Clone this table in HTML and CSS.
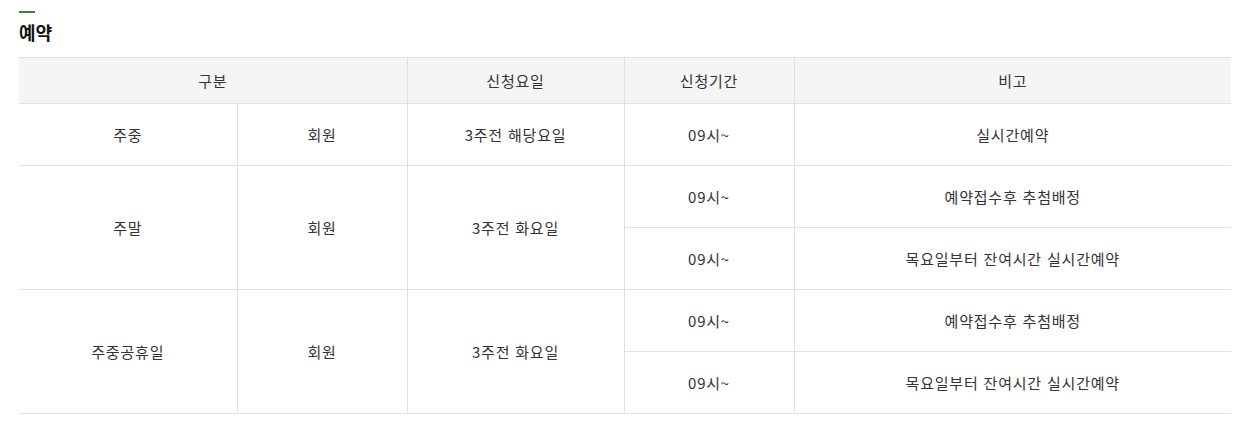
FILE: index.html
```html
<!DOCTYPE html>
<html lang="ko">
<head>
<meta charset="utf-8">
<link rel="stylesheet" href="styles.css">
</head>
<body>
<div class="section">
  <div class="title-bar"></div>
  <h3 class="title">예약</h3>
  <table class="info-table">
    <colgroup>
      <col class="c1"><col class="c2"><col class="c3"><col class="c4"><col class="c5">
    </colgroup>
    <thead>
      <tr>
        <th colspan="2">구분</th>
        <th>신청요일</th>
        <th>신청기간</th>
        <th>비고</th>
      </tr>
    </thead>
    <tbody>
      <tr>
        <td>주중</td>
        <td>회원</td>
        <td>3주전 해당요일</td>
        <td>09시~</td>
        <td>실시간예약</td>
      </tr>
      <tr>
        <td rowspan="2">주말</td>
        <td rowspan="2">회원</td>
        <td rowspan="2">3주전 화요일</td>
        <td>09시~</td>
        <td>예약접수후 추첨배정</td>
      </tr>
      <tr>
        <td>09시~</td>
        <td>목요일부터 잔여시간 실시간예약</td>
      </tr>
      <tr>
        <td rowspan="2">주중공휴일</td>
        <td rowspan="2">회원</td>
        <td rowspan="2">3주전 화요일</td>
        <td>09시~</td>
        <td>예약접수후 추첨배정</td>
      </tr>
      <tr>
        <td>09시~</td>
        <td>목요일부터 잔여시간 실시간예약</td>
      </tr>
    </tbody>
  </table>
</div>
</body>
</html>
```
FILE: styles.css
```css
html, body {
  margin: 0;
  padding: 0;
  background: #fff;
}
body {
  font-family: "Noto Sans CJK KR", "Noto Sans", sans-serif;
  color: #333;
}
.section {
  padding: 11px 23px 0 19px;
}
.title-bar {
  width: 16px;
  height: 2px;
  background: #3a8a1a;
}
.title {
  margin: 8px 0 0;
  font-size: 18px;
  line-height: 22px;
  font-weight: 700;
  color: #111;
  height: 36px;
}
.info-table {
  width: 1212px;
  border-collapse: collapse;
  table-layout: fixed;
  border-top: 1px solid #ddd;
  font-size: 15px;
  letter-spacing: 0.8px;
}
.c1 { width: 218px; }
.c2 { width: 170px; }
.c3 { width: 217px; }
.c4 { width: 170px; }
.c5 { width: 437px; }
.info-table th,
.info-table td {
  border: 1px solid #e0e0e0;
  text-align: center;
  vertical-align: middle;
  padding: 0;
  font-weight: 400;
  color: #333;
  line-height: 20px;
}
.info-table th:first-child,
.info-table td:first-child {
  border-left: none;
}
.info-table th:last-child,
.info-table td:last-child {
  border-right: none;
}
.info-table th {
  background: #f5f5f5;
  height: 45px;
}
.info-table td {
  height: 61px;
}
```
